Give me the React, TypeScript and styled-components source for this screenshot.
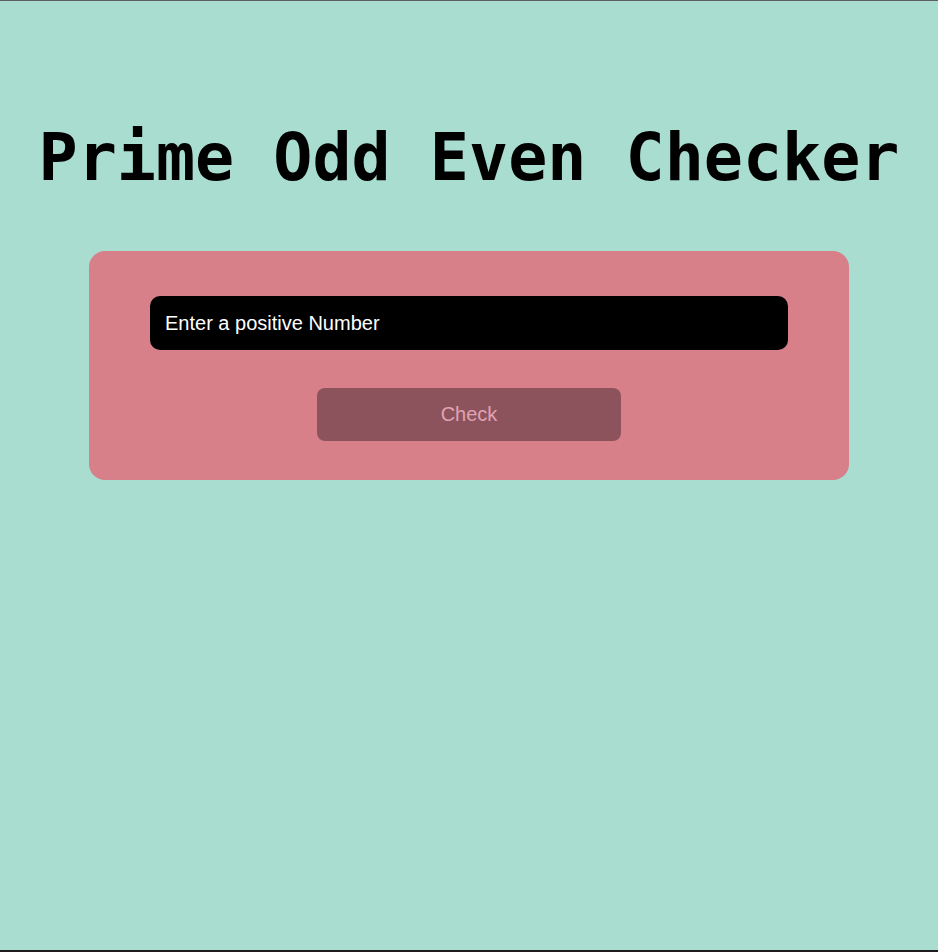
import React from "react";
import styled, { createGlobalStyle } from "styled-components";

const Global = createGlobalStyle`
  html, body { margin: 0; padding: 0; }
  body { background: #a8ddd0; }
`;

const Page = styled.div`
  box-sizing: border-box;
  min-height: 952px;
  border-top: 1px solid #5f5f5f;
  border-bottom: 2px solid #1c1c1c;
  background: #a8ddd0;
  display: flex;
  flex-direction: column;
  align-items: center;
`;

const Title = styled.h1`
  margin: 124px 0 0;
  font-family: "DejaVu Sans Mono", monospace;
  font-weight: bold;
  font-size: 65px;
  line-height: 1;
  color: #000;
  text-align: center;
`;

const Card = styled.div`
  box-sizing: border-box;
  width: 760px;
  margin-top: 61px;
  padding: 45px 0 39px;
  background: #d7808a;
  border-radius: 16px;
  display: flex;
  flex-direction: column;
  align-items: center;
  gap: 38px;
`;

const Input = styled.input`
  box-sizing: border-box;
  width: 638px;
  height: 54px;
  padding: 0 15px;
  border: none;
  outline: none;
  border-radius: 10px;
  background: #000;
  color: #fff;
  font-family: "Liberation Sans", Arial, sans-serif;
  font-size: 20px;
  &::placeholder { color: #fff; opacity: 1; }
`;

const Button = styled.button`
  box-sizing: border-box;
  width: 304px;
  height: 53px;
  border: none;
  border-radius: 8px;
  background: #8c535d;
  color: #e0a3b3;
  font-family: "Liberation Sans", Arial, sans-serif;
  font-size: 20px;
  cursor: pointer;
`;

export default function App() {
  return (
    <>
      <Global />
      <Page>
        <Title>Prime Odd Even Checker</Title>
        <Card>
          <Input type="number" placeholder="Enter a positive Number" />
          <Button>Check</Button>
        </Card>
      </Page>
    </>
  );
}
